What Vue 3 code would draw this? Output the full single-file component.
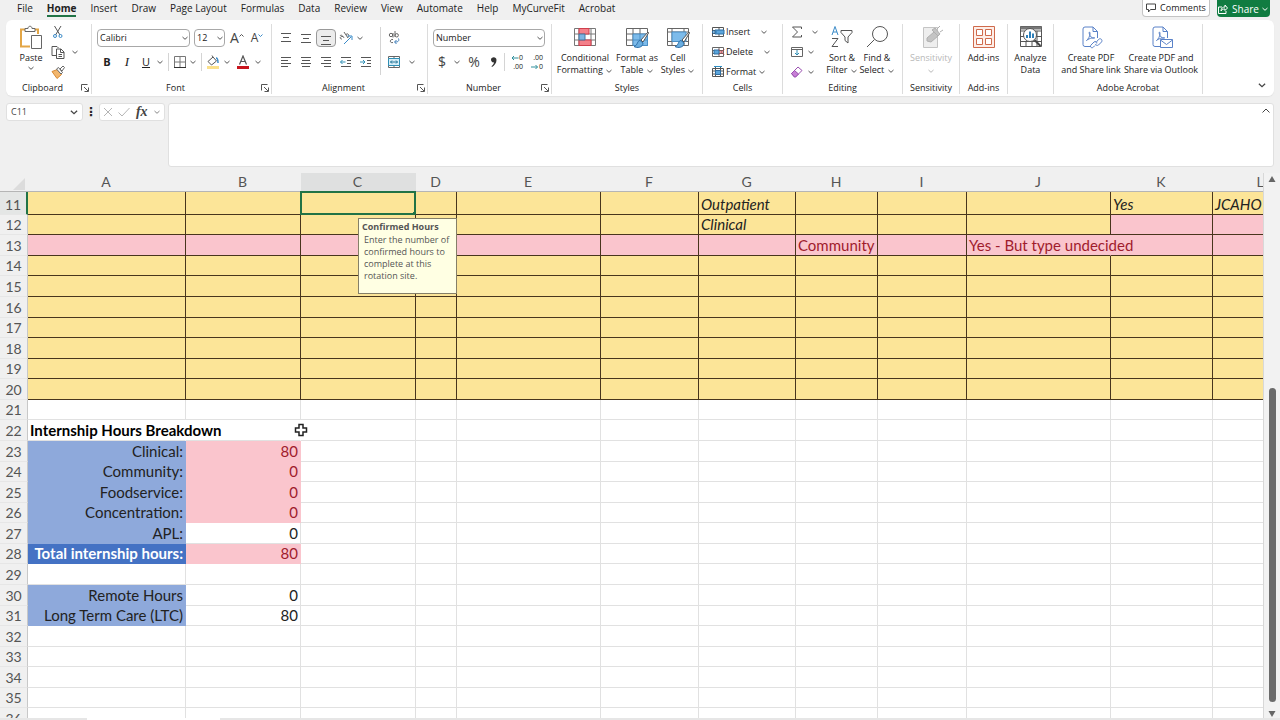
<script setup>
const tabs = ['File', 'Home', 'Insert', 'Draw', 'Page Layout', 'Formulas', 'Data', 'Review', 'View', 'Automate', 'Help', 'MyCurveFit', 'Acrobat']
const columns = ['A', 'B', 'C', 'D', 'E', 'F', 'G', 'H', 'I', 'J', 'K', 'L']

const values = {
  G11: ['Outpatient', 'italic'],
  K11: ['Yes', 'italic'],
  L11: ['JCAHO', 'italic'],
  G12: ['Clinical', 'italic'],
  K12: ['', 'pink'],
  L12: ['', 'pink'],
  H13: ['Community', ''],
  J13: ['Yes - But type undecided', 'spill'],
  A22: ['Internship Hours Breakdown', 'bold spill'],
  B22: ['', 'spill'],
  A23: ['Clinical:', 'label'],
  B23: ['80', 'num pink'],
  A24: ['Community:', 'label'],
  B24: ['0', 'num pink'],
  A25: ['Foodservice:', 'label'],
  B25: ['0', 'num pink'],
  A26: ['Concentration:', 'label'],
  B26: ['0', 'num pink'],
  A27: ['APL:', 'label'],
  B27: ['0', 'num'],
  A28: ['Total internship hours:', 'label total'],
  B28: ['80', 'num pink'],
  A30: ['Remote Hours', 'label'],
  B30: ['0', 'num'],
  A31: ['Long Term Care (LTC)', 'label'],
  B31: ['80', 'num'],
}

const rows = Array.from({ length: 26 }, (_, i) => {
  const n = i + 11
  return {
    n,
    cells: columns.map((c) => {
      const [text, cls] = values[c + n] || ['', '']
      const zone = n === 13 ? 'table pink' : n <= 20 ? 'table' : ''
      return { id: c + n, text, cls: zone + ' ' + cls }
    }),
  }
})

const lines = {
  top: ['M3 3.5h10M5 7.5h6M3 11.5h10'],
  mid: ['M3 4.5h10M5 8.5h6M3 12.5h10'],
  bottom: ['M3 6.5h10M5 10.5h6M3 14.5h10'],
  left: ['M3 3.5h10M3 6.5h7M3 9.5h10M3 12.5h7'],
  center: ['M3 3.5h10M4 6.5h8M3 9.5h10M4 12.5h8'],
  right: ['M3 3.5h10M6 6.5h7M3 9.5h10M6 12.5h7'],
  outdent: ['M3 3.5h10M9 6.5h4M9 9.5h4M3 12.5h10', 'M7.5 8H2.5M4.500 6L2.500 8l2 2'],
  indent: ['M3 3.5h10M9 6.5h4M9 9.5h4M3 12.5h10', 'M2 8h5M5 6l2 2-2 2'],
}
const alignTop = [['top', 'Top Align'], ['mid', 'Middle Align'], ['bottom', 'Bottom Align']]
const alignLow = [['left', 'Align Left'], ['center', 'Center'], ['right', 'Align Right'], ['outdent', 'Decrease Indent'], ['indent', 'Increase Indent']]
</script>

<template>
  <div class="app">
    <svg class="defs" aria-hidden="true">
      <symbol id="chev" viewBox="0 0 8 8"><path d="M1.500 3L4 5.300 6.500 3" fill="none" stroke="currentColor" /></symbol>
      <symbol id="launch" viewBox="0 0 8 8"><path d="M.5 6.500v-6h6M3 3l4 4M7.500 3.500v4h-4" fill="none" stroke="currentColor" /></symbol>
      <symbol id="brush" viewBox="0 0 16 18">
        <path d="M15 1L8 9l2 2 5.500-9z" fill="#fff" stroke="#555" />
        <path d="M7 9.500c-3 0-2 5-6 6 3 2 9 1 9-3.500z" fill="#6aaee0" stroke="#2f6fa8" />
      </symbol>
      <symbol id="pdf" viewBox="0 0 20 24">
        <path d="M9 20.500H3a2 2 0 0 1-2-2V3a2 2 0 0 1 2-2h8l4.500 4.500V12M11 1v4.500h4.500" fill="none" stroke="#5a82c8" />
        <path d="M4.500 14.500c1.500-1 4-5 3.500-7.500s-1.500 0 0 2.500 3 3 4.500 2.500-4.500-.5-8 2.500z" fill="none" stroke="#5a82c8" />
      </symbol>
    </svg>

    <header class="top">
      <nav class="tabs" aria-label="Ribbon tabs">
        <a v-for="t in tabs" :key="t" href="#" :class="{ active: t === 'Home' }">{{ t }}</a>
      </nav>
      <button class="comments">
        <svg width="10" height="10" viewBox="0 0 10 10"><path d="M.5 1h9v5.500h-5L2.500 9V6.500h-2z" fill="none" stroke="#444" /></svg>
        Comments
      </button>
      <button class="share">
        <svg width="10" height="10" viewBox="0 0 10 10"><path d="M4 3H.5v6.500H8V7M3 7c0-3 2-4 4-4V1l2.500 3L7 6.500V5C5 5 4 5.500 3 7z" fill="none" stroke="#fff" /></svg>
        Share
        <svg class="ch"><use href="#chev" /></svg>
      </button>
    </header>

    <section class="ribbon">
      <div class="group clipboard">
        <div class="body">
          <button class="big paste">
            <svg width="24" height="26" viewBox="0 0 24 26">
              <path d="M7 4.500H2v17h9M14 4.500h5V9" fill="none" stroke="#e3a646" stroke-width="2" />
              <path d="M6 6.500v-3h3c0-3 4-3 4 0h3v3z" fill="#fff" stroke="#666" />
              <path d="M12.500 10.500h10v13h-10z" fill="#fff" stroke="#666" />
            </svg>
            <span>Paste</span>
            <svg class="ch"><use href="#chev" /></svg>
          </button>
          <div class="stack clip">
            <button aria-label="Cut"><svg width="14" height="14" viewBox="0 0 14 14"><path d="M3.500 1l5.500 9M10 1L4.500 10" fill="none" stroke="#555" /><circle cx="4" cy="11" r="1.500" fill="none" stroke="#3b8bc8" /><circle cx="9.500" cy="11" r="1.500" fill="none" stroke="#3b8bc8" /></svg></button>
            <button aria-label="Copy"><svg width="14" height="14" viewBox="0 0 14 14"><path d="M5 10.500H1v-9h5l1.500 1.500M5.500 4h4.500l3 3v6.500H5.500zM9.500 4v3.500H13M7.500 9.500h3.500M7.500 11.500h3.500" fill="none" stroke="#555" /></svg></button>
            <button aria-label="Format Painter"><svg width="14" height="14" viewBox="0 0 14 14"><path d="M1 6.500l5.500-2 4 5-4.500 4z" fill="#f2b66d" stroke="#d88a34" /><path d="M5.500 4l2-1.500 4 5-1.500 1.500zM9 4l3-3 1.500 1.500L11 6z" fill="#fff" stroke="#666" /></svg></button>
          </div>
          <svg class="ch copych"><use href="#chev" /></svg>
        </div>
        <footer>Clipboard<svg class="la"><use href="#launch" /></svg></footer>
      </div>

      <div class="group font">
        <div class="body rows">
          <div class="line">
            <label class="sel fname"><select aria-label="Font"><option>Calibri</option></select><svg class="ch"><use href="#chev" /></svg></label>
            <label class="sel fsize"><select aria-label="Font size"><option>12</option></select><svg class="ch"><use href="#chev" /></svg></label>
            <button class="w20 letter" aria-label="Increase Font Size">A<svg width="5" height="5" viewBox="0 0 5 5"><path d="M.5 3.500l2-2 2 2" fill="none" stroke="#555" /></svg></button>
            <button class="w20 letter small" aria-label="Decrease Font Size">A<svg width="5" height="5" viewBox="0 0 5 5"><path d="M.5 1.500l2 2 2-2" fill="none" stroke="#3b8bc8" /></svg></button>
          </div>
          <div class="line">
            <button class="w20 b">B</button>
            <button class="w20 i">I</button>
            <button class="w18 u">U</button>
            <svg class="ch w10"><use href="#chev" /></svg>
            <i class="sep"></i>
            <button class="w16" aria-label="Borders"><svg width="14" height="14" viewBox="0 0 14 14"><path d="M1.500 12V1.500h11V12M7 1.500V12M1.500 7h11" fill="none" stroke="#777" /><path d="M1 12.500h12" stroke="#333" /></svg></button>
            <svg class="ch w10"><use href="#chev" /></svg>
            <i class="sep"></i>
            <button class="w16" aria-label="Fill Color"><svg width="14" height="14" viewBox="0 0 14 14"><path d="M2 6.500l5-4.500 3.500 4-5 4zM7 2L6 .5" fill="none" stroke="#555" /><path d="M10 3c2 0 2 2 2 5" fill="none" stroke="#3b8bc8" stroke-width="1.500" /><path d="M1 11h12v3H1z" fill="#fbe08a" /></svg></button>
            <svg class="ch w12"><use href="#chev" /></svg>
            <button class="w20" aria-label="Font Color"><svg width="14" height="14" viewBox="0 0 14 14"><path d="M3.500 9.500L7 1l3.500 8.500M4.800 6.500h4.400" fill="none" stroke="#555" stroke-width="1.200" /><path d="M1 11h12v3H1z" fill="#c8141d" /></svg></button>
            <svg class="ch w10"><use href="#chev" /></svg>
          </div>
        </div>
        <footer>Font<svg class="la"><use href="#launch" /></svg></footer>
      </div>

      <div class="group align">
        <div class="body">
          <div class="rows">
            <div class="line">
              <button v-for="[k, name] in alignTop" :key="k" class="w20" :class="{ on: k === 'bottom' }" :aria-label="name">
                <svg width="16" height="16" viewBox="0 0 16 16"><path :d="lines[k][0]" stroke="#555" /></svg>
              </button>
              <button class="w20" aria-label="Orientation"><svg width="16" height="16" viewBox="0 0 16 16"><path d="M2 6c1-2 3 0 4 2M4 9c-3 0-2-3 1-2.500M6 2l4 6M8 4.500c2-2 4 1 2 3" fill="none" stroke="#666" /><path d="M6 14l7-7M9.500 6H14v4" fill="none" stroke="#3b8bc8" /></svg></button>
              <svg class="ch"><use href="#chev" /></svg>
            </div>
            <div class="line">
              <button v-for="[k, name] in alignLow" :key="k" class="w20" :aria-label="name">
                <svg width="16" height="16" viewBox="0 0 16 16"><path :d="lines[k][0]" stroke="#555" /><path v-if="lines[k][1]" :d="lines[k][1]" fill="none" stroke="#2e8fb5" /></svg>
              </button>
            </div>
          </div>
          <i class="sep tall"></i>
          <div class="rows">
            <div class="line">
              <button class="w18" aria-label="Wrap Text"><svg width="14" height="14" viewBox="0 0 14 14"><circle cx="4" cy="4" r="1.700" fill="none" stroke="#666" /><path d="M6 2v4.500M8 0v6M6 8.500c-3-1-4 4 0 3" fill="none" stroke="#666" /><circle cx="9.700" cy="4.300" r="1.700" fill="none" stroke="#666" /><path d="M11.500 7.500c1 3-1 3.500-3.500 3.500M9.500 9L7.500 11l2 2" fill="none" stroke="#3b7bb8" /></svg></button>
            </div>
            <div class="line">
              <button class="w18" aria-label="Merge and Center"><svg width="14" height="14" viewBox="0 0 14 14"><path d="M1.500 1.500h11v11h-11zM7 1.500v2M7 10.500v2" fill="none" stroke="#666" /><path d="M1.500 3.500h11v7h-11z" fill="#d8eef8" stroke="#2e8fb5" /><path d="M3.500 7h7M5 5.500L3.500 7 5 8.500M9 5.500L10.500 7 9 8.500" fill="none" stroke="#1f7396" /></svg></button>
              <svg class="ch merge"><use href="#chev" /></svg>
            </div>
          </div>
        </div>
        <footer>Alignment<svg class="la"><use href="#launch" /></svg></footer>
      </div>

      <div class="group number">
        <div class="body rows">
          <div class="line">
            <label class="sel nf"><select aria-label="Number format"><option>Number</option></select><svg class="ch"><use href="#chev" /></svg></label>
          </div>
          <div class="line">
            <button class="w18 sym">$</button>
            <svg class="ch w12"><use href="#chev" /></svg>
            <button class="w22 sym">%</button>
            <button class="w18" aria-label="Comma Style"><svg width="8" height="12" viewBox="0 0 8 12"><path d="M1 3.500C1 .5 6.500 0 6.500 4c0 3-2 5.500-4.500 7l-.5-.7C3 9 4 7.500 4 6.300 2.500 6.800 1 5.500 1 3.500z" fill="#333" /></svg></button>
            <i class="sep tight"></i>
            <button class="w20 dec" aria-label="Increase Decimal"><span><svg width="8" height="6" viewBox="0 0 8 6"><path d="M7.500 3H1M3 1L1 3l2 2" fill="none" stroke="#2e8f9b" /></svg>0</span><span>.00</span></button>
            <button class="w20 dec" aria-label="Decrease Decimal"><span>.00</span><span><svg width="8" height="6" viewBox="0 0 8 6"><path d="M0 3h6.500M4.500 1l2 2-2 2" fill="none" stroke="#2e8f9b" /></svg>0</span></button>
          </div>
        </div>
        <footer>Number<svg class="la"><use href="#launch" /></svg></footer>
      </div>

      <div class="group styles">
        <div class="body">
          <button class="big w58">
            <svg width="24" height="24" viewBox="0 0 24 24"><path d="M1.500 3.500h21v17h-21zM1.500 9h21M1.500 15h21M6 3.500v17M18 3.500v17" fill="#fff" stroke="#777" /><path d="M6 3.500h10V9H6zM6 15h12v5.500H6z" fill="#f4808a" stroke="#cf3f4c" /><path d="M6 9h6v6H6z" fill="#7db3e2" stroke="#46769f" /></svg>
            <span>Conditional<br />Formatting <svg class="ch"><use href="#chev" /></svg></span>
          </button>
          <button class="big w46">
            <svg width="26" height="24" viewBox="0 0 26 24"><path d="M2.500 3.500h21v17h-21zM2.500 9h21M2.500 15h21M9 3.500v17M16 3.500v17" fill="#fff" stroke="#666" /><path d="M9 9h14.500v11.500H9z" fill="#7dbbea" stroke="#4a8fc6" /><path d="M9 15h14M16 9v11" stroke="#4a8fc6" /><use href="#brush" x="9" y="6" width="16" height="18" /></svg>
            <span>Format as<br />Table <svg class="ch"><use href="#chev" /></svg></span>
          </button>
          <button class="big w36">
            <svg width="26" height="24" viewBox="0 0 26 24"><path d="M2.500 3.500h21v17h-21zM2.500 7h21M2.500 16.500h21M7 3.500v17M19 3.500v17" fill="#fff" stroke="#666" /><path d="M7 7h14v9.500H7z" fill="#7dbbea" stroke="#4a8fc6" /><use href="#brush" x="9" y="6" width="16" height="18" /></svg>
            <span>Cell<br />Styles <svg class="ch"><use href="#chev" /></svg></span>
          </button>
        </div>
        <footer>Styles</footer>
      </div>

      <div class="group cells">
        <div class="body stack">
          <button class="item ins"><svg width="14" height="12" viewBox="0 0 14 12"><path d="M1.500 1.500h11v9h-11zM1.500 4.500h11M1.500 7.500h11M8 1.500v9" fill="#fff" stroke="#555" /><path d="M4 4h9v4H4z" fill="#5ba5dc" stroke="#2d6ea3" /><path d="M1 6h5M3 4L1 6l2 2" fill="none" stroke="#2d6ea3" /></svg><span>Insert</span><svg class="ch"><use href="#chev" /></svg></button>
          <button class="item del"><svg width="14" height="12" viewBox="0 0 14 12"><path d="M1.500 1.500h11v9h-11zM1.500 4.500h11M1.500 7.500h11M8 1.500v9" fill="#fff" stroke="#666" /><path d="M3 4h5v4H3z" fill="#5ba5dc" stroke="#2d6ea3" /><path d="M8 3.500l5 5M13 3.500l-5 5" stroke="#bd3d45" /></svg><span>Delete</span><svg class="ch"><use href="#chev" /></svg></button>
          <button class="item"><svg width="14" height="12" viewBox="0 0 14 12"><path d="M1.500 2.500h11v8h-11zM1.500 5h11M1.500 8h11M4.500 1v10M9.500 1v10" fill="#fff" stroke="#555" /><path d="M4.500 4.500h5v4h-5z" fill="#5ba5dc" stroke="#2d6ea3" /><path d="M3 .5h8" stroke="#2d8fc6" /></svg><span>Format</span><svg class="ch"><use href="#chev" /></svg></button>
        </div>
        <footer>Cells</footer>
      </div>

      <div class="group editing">
        <div class="body">
          <div class="stack edit">
            <button class="sum" aria-label="AutoSum"><svg width="14" height="14" viewBox="0 0 14 14"><path d="M11.500 4V2h-9l5 5-5 5h9v-2" fill="none" stroke="#555" /></svg><svg class="ch"><use href="#chev" /></svg></button>
            <button aria-label="Fill"><svg width="14" height="14" viewBox="0 0 14 14"><path d="M1.500 2.500h11v9h-11zM1.500 4.500h11" fill="none" stroke="#666" /><path d="M7 5v5M5 8l2 2 2-2" fill="none" stroke="#2e8fb5" /></svg><svg class="ch"><use href="#chev" /></svg></button>
            <button aria-label="Clear"><svg width="14" height="14" viewBox="0 0 14 14"><path d="M1.500 8.500l6.500-6.500 4 3.500-6.500 6.500h-1z" fill="#fff" stroke="#9a4fb0" /><path d="M1.500 8.500L4.500 5.500l4 3.500-3 3h-1z" fill="#c77fd6" stroke="#9a4fb0" /></svg><svg class="ch"><use href="#chev" /></svg></button>
          </div>
          <button class="big w34">
            <svg width="24" height="24" viewBox="0 0 24 24"><path d="M2 10l3-8.500L8 10M3 7h4" fill="none" stroke="#3b8bc8" /><path d="M2 13.500h6l-6 8h6" fill="none" stroke="#555" /><path d="M11 5.500h11v2L18 12v6l-3-2.500V12l-4-4.500z" fill="none" stroke="#555" /></svg>
            <span>Sort &amp;<br />Filter <svg class="ch"><use href="#chev" /></svg></span>
          </button>
          <button class="big w36">
            <svg width="24" height="24" viewBox="0 0 24 24"><circle cx="15" cy="9" r="7.500" fill="none" stroke="#555" /><path d="M9.500 14.500L2 22" stroke="#555" /></svg>
            <span>Find &amp;<br />Select <svg class="ch"><use href="#chev" /></svg></span>
          </button>
        </div>
        <footer>Editing</footer>
      </div>

      <div class="group sens">
        <div class="body">
          <button class="big" disabled>
            <svg width="24" height="24" viewBox="0 0 24 24"><path d="M4.500 2.500h14v20h-14z" fill="#eee" stroke="#c4c4c4" /><path d="M8 13l7-6 4 4-7 6-4-1zM13 5l3-2 5 6-2 2zM18 4l3-3M21 7l3-2" fill="#c4c4c4" stroke="#b0b0b0" /></svg>
            <span>Sensitivity<br /><svg class="ch"><use href="#chev" /></svg></span>
          </button>
        </div>
        <footer>Sensitivity</footer>
      </div>

      <div class="group addins">
        <div class="body">
          <button class="big">
            <svg width="24" height="24" viewBox="0 0 24 24"><path d="M1.500 1.500h21v21h-21z" fill="#fdeee8" stroke="#cf6a4c" /><path d="M4.500 4.500h6v6h-6zM13.500 4.500h6v6h-6zM4.500 13.500h6v6h-6zM13.500 13.500h6v6h-6z" fill="#fff" stroke="#cf6a4c" /></svg>
            <span>Add-ins</span>
          </button>
        </div>
        <footer>Add-ins</footer>
      </div>

      <div class="group analyze">
        <div class="body">
          <button class="big">
            <svg width="24" height="24" viewBox="0 0 24 24"><path d="M1.500 1.500h21v20h-21zM1.500 6h21M1.500 11.500h21M1.500 16.500h21M7 16v5M13 16v5M18 6v15" fill="#fff" stroke="#555" /><path d="M1.500 1.500h21v3h-21z" fill="#777" /><circle cx="11" cy="10" r="6.500" fill="#fff" stroke="#555" /><path d="M8 10v3M11 6.500v6.500M14 8.500v4.500" stroke="#2f7fb8" stroke-width="2" /><path d="M15.500 15l6 6" stroke="#444" stroke-width="2" /></svg>
            <span>Analyze<br />Data</span>
          </button>
        </div>
      </div>

      <div class="group adobe">
        <div class="body">
          <button class="big w64">
            <svg width="24" height="24" viewBox="0 0 24 24"><use href="#pdf" x="3" y="1" width="20" height="24" /><path d="M12 18h10v6H12z" fill="#fff" /><path d="M16 20.500l-1.500 1.500c-2 2-4-.5-2.500-2l3-3c1.500-1.200 3 0 2.800 1.500M17 17.500l2.500-3c2-2 4.500.5 3 2.500l-3 3c-1.200 1-2.800.3-3-1" fill="none" stroke="#5a82c8" /></svg>
            <span>Create PDF<br />and Share link</span>
          </button>
          <button class="big w76">
            <svg width="24" height="24" viewBox="0 0 24 24"><use href="#pdf" x="3" y="1" width="20" height="24" /><path d="M11.500 14.500h12v8h-12zM11.500 15l6 4.500 6-4.500" fill="#fff" stroke="#5a82c8" /></svg>
            <span>Create PDF and<br />Share via Outlook</span>
          </button>
        </div>
        <footer>Adobe Acrobat</footer>
      </div>
      <button class="collapse" aria-label="Ribbon display options"><svg width="10" height="10"><use href="#chev" /></svg></button>
    </section>

    <section class="formula">
      <label class="namebox"><input value="C11" aria-label="Name Box" /><svg width="10" height="10"><use href="#chev" /></svg></label>
      <span class="grip">⋮</span>
      <div class="fx">
        <button aria-label="Cancel"><svg width="10" height="10" viewBox="0 0 10 10"><path d="M1 1l8 8M9 1L1 9" stroke="#b5b5b5" /></svg></button>
        <button aria-label="Enter"><svg width="12" height="10" viewBox="0 0 12 10"><path d="M.5 5.500L4 9l7.500-8" fill="none" stroke="#b5b5b5" /></svg></button>
        <button class="fn">fx</button>
        <svg class="ch"><use href="#chev" /></svg>
      </div>
      <div class="entry">
        <textarea aria-label="Formula Bar"></textarea>
        <button aria-label="Collapse Formula Bar"><svg width="10" height="10" viewBox="0 0 10 10"><path d="M1.500 6.500L5 3l3.500 3.500" fill="none" stroke="#444" /></svg></button>
      </div>
    </section>

    <main class="sheet">
      <div class="view">
        <table>
          <colgroup>
            <col class="c0" />
            <col v-for="c in columns" :key="c" :class="'c' + c" />
          </colgroup>
          <thead>
            <tr>
              <th class="corner"><svg width="12" height="12" viewBox="0 0 12 12"><path d="M12 0v12H0z" fill="#dcdcdc" /></svg></th>
              <th v-for="c in columns" :key="c" :class="{ cur: c === 'C' }">{{ c }}</th>
            </tr>
          </thead>
          <tbody>
            <tr v-for="r in rows" :key="r.n">
              <th :class="{ cur: r.n === 11 }">{{ r.n }}</th>
              <td v-for="c in r.cells" :key="c.id" :class="c.cls">
                <template v-if="c.id === 'C11'">
                  <div class="selection"></div>
                  <div class="tip" role="tooltip">
                    <strong>Confirmed Hours</strong>
                    <p>Enter the number of confirmed hours to complete at this rotation site.</p>
                  </div>
                </template>
                <svg v-else-if="c.id === 'B22'" class="pointer" width="14" height="14" viewBox="0 0 14 14"><path d="M5 1.500h4V5h3.500v4H9v3.500H5V9H1.500V5H5z" fill="#fff" stroke="#222" stroke-width="1.500" /></svg>
                <template v-else>{{ c.text }}</template>
              </td>
            </tr>
          </tbody>
        </table>
      </div>
      <div class="scroll" aria-hidden="true">
        <svg width="8" height="8" viewBox="0 0 8 8"><path d="M4 1l3.500 6h-7z" fill="#666" /></svg>
        <div class="track"><div class="before"></div><div class="thumb"></div></div>
        <svg width="8" height="8" viewBox="0 0 8 8"><path d="M4 7l3.500-6h-7z" fill="#666" /></svg>
      </div>
    </main>
    <div class="bottom"><i></i></div>
  </div>
</template>

<style>
body { background: #f0f0f0; }
</style>

<style scoped>
.app { height: 100vh; display: flex; flex-direction: column; overflow: hidden; font: 9px/12px "Open Sans", "Noto Sans", sans-serif; color: #222; }
.app * { box-sizing: border-box; }
.defs { position: absolute; width: 0; height: 0; }
svg { display: block; flex: none; }
button { font: inherit; color: inherit; background: none; border: 0; padding: 0; margin: 0; display: flex; align-items: center; justify-content: center; }
.ch { width: 8px; height: 8px; color: #555; }
.w10 { width: 10px; } .w12 { width: 12px; } .w16 { width: 16px; } .w18 { width: 18px; } .w20 { width: 20px; } .w22 { width: 22px; }
.w34 { width: 34px; } .w36 { width: 36px; } .w46 { width: 46px; } .w58 { width: 58px; } .w64 { width: 66px; } .w76 { width: 74px; }

.top { display: flex; height: 20px; padding: 0 10px 3px 17px; flex: none; font-size: 10px; }
.tabs { flex: 1; display: flex; gap: 14px; }
.tabs a { color: inherit; text-decoration: none; height: 17px; line-height: 16px; white-space: nowrap; }
.tabs .active { font-weight: 700; border-bottom: 2px solid #217346; }
.comments, .share { height: 17px; gap: 4px; border-radius: 0 0 4px 4px; }
.comments { width: 68px; background: #fff; border: 1px solid #c4c4c4; border-top: 0; margin-right: 7px; font-size: 9px; }
.share { width: 53px; background: #107c41; color: #fff; }
.share .ch { color: #fff; margin-left: -2px; }

.ribbon { display: flex; flex: none; margin: 0 6px; height: 76px; background: #fff; border-radius: 6px; box-shadow: 0 1px 1px #e2e2e2; }
.group { position: relative; display: flex; flex-direction: column; flex: none; margin: 4px 0 2px; padding: 0 4px; border-right: 1px solid #dcdcdc; }
.body { display: flex; flex: 1; min-height: 0; }
.group footer { display: flex; align-items: center; justify-content: center; height: 12px; white-space: nowrap; }
.la { width: 8px; height: 8px; position: absolute; right: 2px; bottom: 2px; color: #555; }
.clipboard { width: 86px; } .font { width: 180px; } .align { width: 156px; } .number { width: 124px; } .styles { width: 151px; } .cells { width: 80px; }
.editing { width: 120px; } .sens { width: 57px; padding: 0; } .addins { width: 48px; padding: 0; } .analyze { width: 46px; padding: 0; } .adobe { width: 149px; }
.clipboard footer, .font footer, .align footer, .number footer { padding-right: 12px; }

.big { flex-direction: column; justify-content: flex-start; white-space: nowrap; padding-top: 1px; }
.big span { line-height: 12px; text-align: center; margin-top: 3px; }
.paste span { margin-top: 1px; }
.big span .ch { display: inline-block; vertical-align: middle; }
.sens .big, .addins .big, .analyze .big { flex: 1; }
.big:disabled, .big:disabled .ch { color: #b8b8b8; }
.paste { width: 42px; }
.stack { display: flex; flex-direction: column; gap: 4px; }
.stack button { height: 16px; }
.clip { width: 14px; margin-left: -1px; }
.copych { margin: 24px 0 0 6px; }
.rows { display: flex; flex-direction: column; gap: 6px; padding-top: 5px; }
.line { display: flex; align-items: center; height: 18px; }
.sel { position: relative; height: 18px; }
.sel select { appearance: none; width: 100%; height: 18px; font: inherit; color: inherit; background: #fff; border: 1px solid #a8a8a8; border-radius: 4px; padding: 0 2px; }
.sel .ch { position: absolute; right: 1px; top: 5px; }
.fname { width: 93px; margin: 0 4px 0 1px; } .fsize { width: 31px; margin-right: 2px; } .nf { width: 112px; margin-left: 1px; }
.font .line + .line, .number .line + .line { padding-left: 1px; }
.letter { font-size: 14px; color: #444; }
.letter svg { margin-bottom: 6px; }
.small { font-size: 12px; }
.b { font-weight: 700; font-size: 11px; } .i { font: italic 13px "Liberation Serif", serif; } .u { text-decoration: underline; font-size: 11px; }
.sep { width: 1px; height: 18px; margin: 0 3px; background: #d4d4d4; }
.sep.tight { margin: 0 1px; }
.sep.tall { height: 48px; margin: 3px 4px 0; }
.on { height: 18px; border: 1px solid #999; border-radius: 4px; background: #ececec; }
.merge { margin-left: 5px; }
.sym { font-size: 14px; color: #444; }
.dec { flex-direction: column; font-size: 7px; line-height: 7px; align-items: flex-end; padding-right: 3px; }
.dec span { display: flex; align-items: center; height: 9px; }
.item { justify-content: flex-start; }
.item span { margin: 0 2px 0 1px; }
.cells .body { padding-left: 4px; }
.ins .ch, .del .ch { margin-left: 8px; }
.edit { width: 38px; padding-left: 3px; }
.edit button { justify-content: flex-start; gap: 3px; }
.edit .sum { gap: 7px; }
.collapse { margin: auto 7px 6px auto; color: #444; }

.formula { display: flex; flex: none; align-items: flex-start; margin: 7px 6px 0; height: 64px; }
.namebox, .fx { display: flex; align-items: center; height: 18px; background: #fff; border: 1px solid #e0e0e0; border-radius: 3px; }
.namebox { width: 77px; padding-right: 3px; color: #444; }
.namebox input { flex: 1; min-width: 0; border: 0; background: none; font: inherit; color: inherit; padding: 0 4px; }
.grip { width: 16px; text-align: center; font: 700 12px/18px "DejaVu Sans", sans-serif; }
.fx { width: 66px; justify-content: space-around; }
.fn { font: italic 700 14px "Liberation Serif", serif; color: #444; }
.fx .ch { color: #888; }
.entry { flex: 1; display: flex; align-items: flex-start; height: 64px; margin-left: 3px; background: #fff; border: 1px solid #e0e0e0; border-radius: 3px; padding: 2px; }
.entry textarea { flex: 1; height: 100%; border: 0; resize: none; background: none; }

.sheet { flex: 1; min-height: 0; display: flex; margin-top: 6px; }
.view { flex: 1; min-width: 0; overflow: hidden; background: #fff; border-right: 1px solid #d8d8d8; }
table { table-layout: fixed; width: 1309px; border-collapse: separate; border-spacing: 0; font: 15px/18px Lato, "Open Sans", sans-serif; color: #222; }
.c0 { width: 28px; } .cA { width: 158px; } .cB, .cC { width: 115px; } .cD { width: 41px; } .cE, .cJ { width: 144px; } .cF { width: 98px; } .cG { width: 97px; } .cH { width: 82px; } .cI { width: 89px; } .cK { width: 102px; } .cL { width: 96px; }
th { font-weight: 400; font-size: 14px; color: #555; background: #f0f0f0; padding: 0; text-align: center; }
thead th { height: 19px; line-height: 18px; border-bottom: 1px solid #b5b5b5; padding-right: 2px; }
thead .cur { background: #dfe0e0; border-bottom-color: #217346; }
.corner svg { margin: 3px 0 0 13px; }
tbody th { border-right: 1px solid #c8c8c8; border-bottom: 1px solid #e6e6e6; }
tbody .cur { background: #e4e6e5; border-right: 2px solid #217346; }
tbody th, td { height: 21px; vertical-align: bottom; }
tbody tr:nth-child(7n + 2) > *, tbody tr:nth-child(7n + 4) > *, tbody tr:nth-child(7n) > * { height: 20px; }
tbody tr:first-child > * { height: 23px; }
td { position: relative; padding: 0 2px 1px; white-space: nowrap; border-right: 1px solid #e1e1e1; border-bottom: 1px solid #e1e1e1; }
.table { background: #fce598; border-color: #48351d; }
.pink { background-color: #fac5cd; color: #a01c2c; }
.italic { font-style: italic; }
.bold { font-weight: 700; color: #000; }
.spill { z-index: 1; border-right-color: transparent; }
.label { background: #8ea9db; border-color: #8ea9db; text-align: right; }
.total { background: #4472c4; border-color: #4472c4; color: #fff; font-weight: 700; }
.num { text-align: right; }
.num.pink { border-color: #fac5cd; }
.selection { position: absolute; inset: -1px; border: 2px solid #217346; }
.selection::after { content: ""; position: absolute; right: -3px; bottom: -3px; width: 4px; height: 4px; background: #217346; }
.tip { position: absolute; z-index: 2; left: 57px; top: 26px; width: 99px; height: 76px; padding: 2px 3px; background: #ffffe3; border: 1px solid #857f68; white-space: normal; font: 9px/12px "Open Sans", "Noto Sans", sans-serif; color: #555; }
.tip strong { display: block; white-space: nowrap; }
.tip p { margin: 1px 0 0 2px; }
.pointer { position: absolute; z-index: 2; right: -8px; top: 3px; }
.scroll { width: 16px; display: flex; flex-direction: column; align-items: center; padding: 2px 0 0; background: #f2f2f2; }
.track { flex: 1; display: flex; flex-direction: column; padding: 4px 0 8px; }
.before { flex: 200; }
.thumb { flex: 312; width: 7px; border-radius: 4px; background: #6b6b6b; }
.bottom { height: 2px; flex: none; background: #e6e6e6; padding-left: 87px; }
.bottom i { display: block; width: 133px; height: 2px; background: #fff; }
</style>
